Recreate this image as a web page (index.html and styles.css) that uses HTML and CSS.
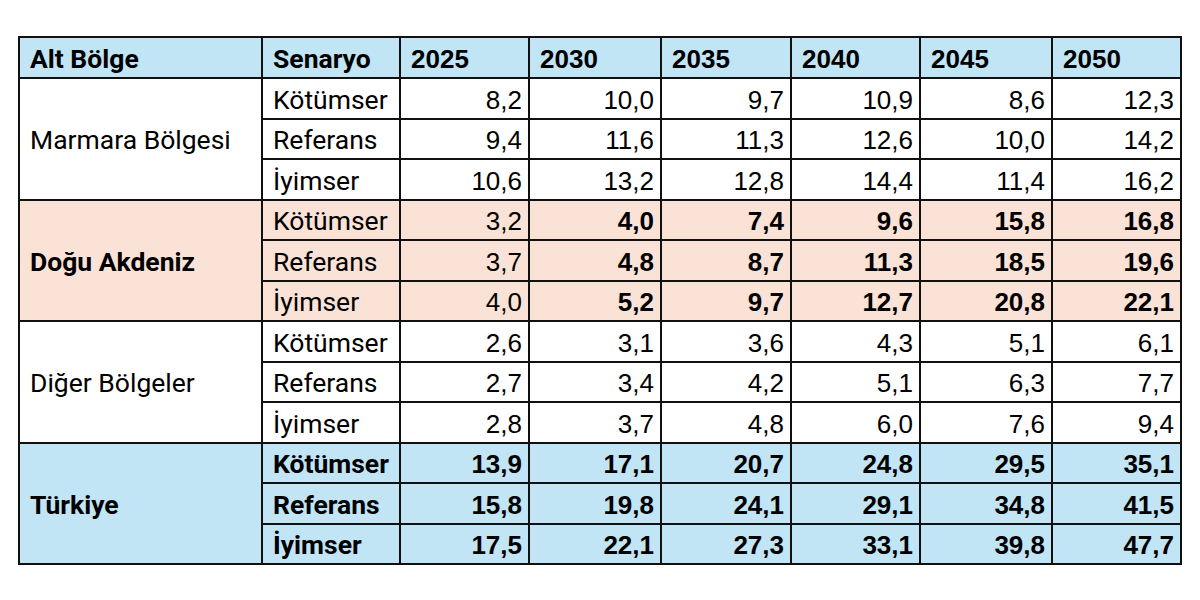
FILE: index.html
```html
<!DOCTYPE html>
<html lang="tr">
<head>
<meta charset="utf-8">
<link rel="stylesheet" href="styles.css">
</head>
<body>
<table class="grid">
  <colgroup>
    <col class="c-region"><col class="c-scen">
    <col class="c-y1"><col class="c-y2"><col class="c-y3"><col class="c-y4"><col class="c-y5"><col class="c-y6">
  </colgroup>
  <thead>
    <tr class="head">
      <th>Alt Bölge</th><th>Senaryo</th><th>2025</th><th>2030</th><th>2035</th><th>2040</th><th>2045</th><th>2050</th>
    </tr>
  </thead>
  <tbody>
    <tr>
      <td class="region" rowspan="3">Marmara Bölgesi</td>
      <td class="scen">Kötümser</td><td class="num">8,2</td><td class="num">10,0</td><td class="num">9,7</td><td class="num">10,9</td><td class="num">8,6</td><td class="num">12,3</td>
    </tr>
    <tr>
      <td class="scen">Referans</td><td class="num">9,4</td><td class="num">11,6</td><td class="num">11,3</td><td class="num">12,6</td><td class="num">10,0</td><td class="num">14,2</td>
    </tr>
    <tr>
      <td class="scen">İyimser</td><td class="num">10,6</td><td class="num">13,2</td><td class="num">12,8</td><td class="num">14,4</td><td class="num">11,4</td><td class="num">16,2</td>
    </tr>
    <tr class="peach">
      <td class="region bold" rowspan="3">Doğu Akdeniz</td>
      <td class="scen">Kötümser</td><td class="num">3,2</td><td class="num bold">4,0</td><td class="num bold">7,4</td><td class="num bold">9,6</td><td class="num bold">15,8</td><td class="num bold">16,8</td>
    </tr>
    <tr class="peach">
      <td class="scen">Referans</td><td class="num">3,7</td><td class="num bold">4,8</td><td class="num bold">8,7</td><td class="num bold">11,3</td><td class="num bold">18,5</td><td class="num bold">19,6</td>
    </tr>
    <tr class="peach">
      <td class="scen">İyimser</td><td class="num">4,0</td><td class="num bold">5,2</td><td class="num bold">9,7</td><td class="num bold">12,7</td><td class="num bold">20,8</td><td class="num bold">22,1</td>
    </tr>
    <tr>
      <td class="region" rowspan="3">Diğer Bölgeler</td>
      <td class="scen">Kötümser</td><td class="num">2,6</td><td class="num">3,1</td><td class="num">3,6</td><td class="num">4,3</td><td class="num">5,1</td><td class="num">6,1</td>
    </tr>
    <tr>
      <td class="scen">Referans</td><td class="num">2,7</td><td class="num">3,4</td><td class="num">4,2</td><td class="num">5,1</td><td class="num">6,3</td><td class="num">7,7</td>
    </tr>
    <tr>
      <td class="scen">İyimser</td><td class="num">2,8</td><td class="num">3,7</td><td class="num">4,8</td><td class="num">6,0</td><td class="num">7,6</td><td class="num">9,4</td>
    </tr>
    <tr class="blue">
      <td class="region bold" rowspan="3">Türkiye</td>
      <td class="scen bold">Kötümser</td><td class="num bold">13,9</td><td class="num bold">17,1</td><td class="num bold">20,7</td><td class="num bold">24,8</td><td class="num bold">29,5</td><td class="num bold">35,1</td>
    </tr>
    <tr class="blue">
      <td class="scen bold">Referans</td><td class="num bold">15,8</td><td class="num bold">19,8</td><td class="num bold">24,1</td><td class="num bold">29,1</td><td class="num bold">34,8</td><td class="num bold">41,5</td>
    </tr>
    <tr class="blue">
      <td class="scen bold">İyimser</td><td class="num bold">17,5</td><td class="num bold">22,1</td><td class="num bold">27,3</td><td class="num bold">33,1</td><td class="num bold">39,8</td><td class="num bold">47,7</td>
    </tr>
  </tbody>
</table>
</body>
</html>
```

FILE: styles.css
```css
html, body {
  margin: 0;
  padding: 0;
  background: #ffffff;
}

body {
  padding: 36px 0 0 18px;
}

.grid {
  border-collapse: collapse;
  table-layout: fixed;
  width: 1164px;
  color: #000;
  font-family: "Liberation Sans", Arial, sans-serif;
  font-size: 26px;
}

.c-region { width: 243px; }
.c-scen { width: 138px; }
.c-y1 { width: 129px; }
.c-y2 { width: 132px; }
.c-y3 { width: 130px; }
.c-y4 { width: 129px; }
.c-y5 { width: 132px; }
.c-y6 { width: 129px; }

.grid th,
.grid td {
  border: 2px solid #111;
  padding: 3px 6px 0 10px;
  vertical-align: middle;
  line-height: 1;
  white-space: nowrap;
  overflow: hidden;
}

.grid tr { height: 40.5px; }
.grid .head { height: 41px; }

.head th {
  background: #c1e5f5;
  text-align: left;
  font-weight: bold;
}

.head th:nth-child(-n+2),
.region,
.scen {
  font-family: Roboto, "Liberation Sans", sans-serif;
  font-size: 26.5px;
}

.region { text-align: left; font-weight: normal; }
.scen { text-align: left; }
.num { text-align: right; }
.bold { font-weight: bold; }

.peach td { background: #fbe2d6; }
.blue td { background: #c1e5f5; }
```
